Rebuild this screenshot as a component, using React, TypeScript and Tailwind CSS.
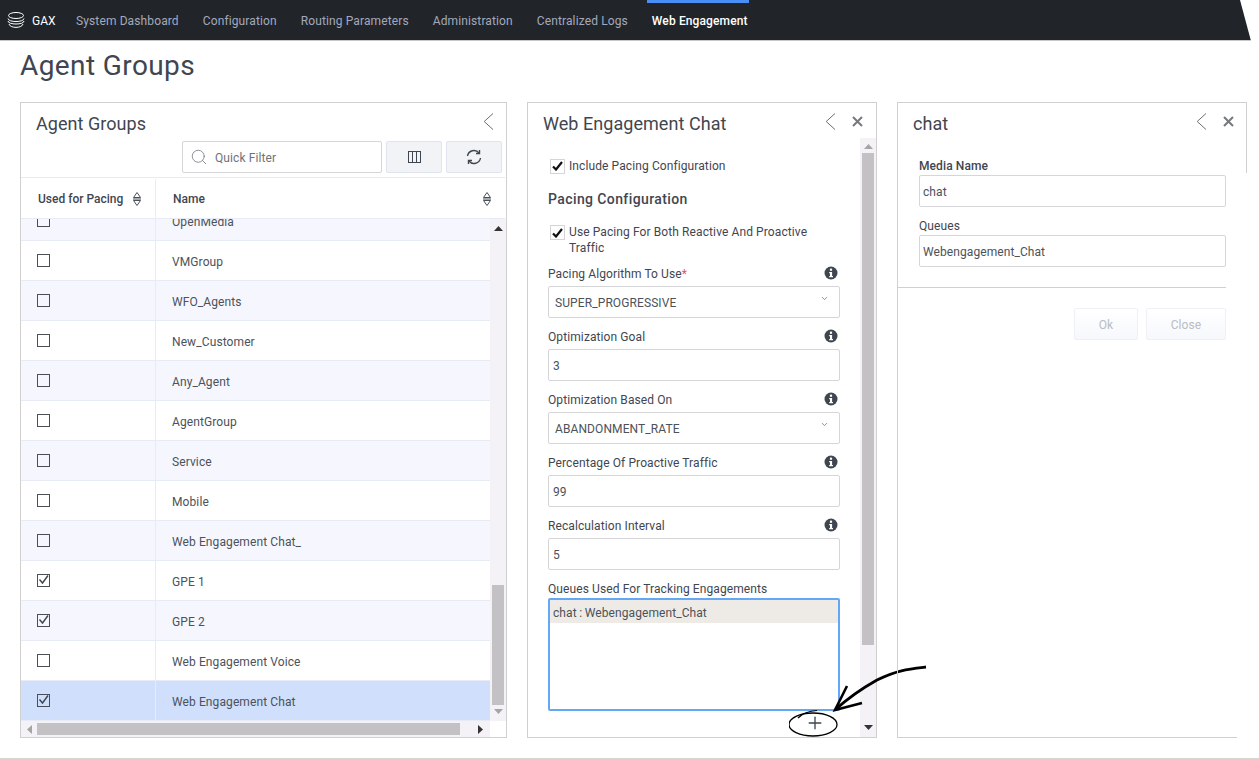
import { Search, ChevronDown, Plus } from 'lucide-react';

const navItems = ['System Dashboard', 'Configuration', 'Routing Parameters', 'Administration', 'Centralized Logs'];

const rows = [
  { name: 'VMGroup', checked: false },
  { name: 'WFO_Agents', checked: false },
  { name: 'New_Customer', checked: false },
  { name: 'Any_Agent', checked: false },
  { name: 'AgentGroup', checked: false },
  { name: 'Service', checked: false },
  { name: 'Mobile', checked: false },
  { name: 'Web Engagement Chat_', checked: false },
  { name: 'GPE 1', checked: true },
  { name: 'GPE 2', checked: true },
  { name: 'Web Engagement Voice', checked: false },
];

function SortIcon() {
  return (
    <svg width="10" height="16" viewBox="0 0 10 16" fill="none" stroke="#4b5158" strokeWidth="1">
      <path d="M5 1.5 L8.5 6.5 H1.5 Z" />
      <path d="M1 8 H9" />
      <path d="M1.5 9.5 H8.5 L5 14.5 Z" />
    </svg>
  );
}

function InfoIcon() {
  return (
    <svg width="14" height="14" viewBox="0 0 14 14" className="-mt-[2px]">
      <circle cx="7" cy="7" r="6.5" fill="#3f4650" />
      <rect x="5.9" y="2.6" width="2.2" height="2.2" fill="#fff" />
      <path d="M5.2 5.9 H8.1 V9.9 H9 V11.2 H5.2 V9.9 H6 V7.2 H5.2 Z" fill="#fff" />
    </svg>
  );
}

function GridCheck({ checked }: { checked: boolean }) {
  return (
    <span className="w-[13px] h-[13px] border border-[#4a4f57] flex items-center justify-center">
      {checked && (
        <svg width="11" height="11" viewBox="0 0 11 11" fill="none" stroke="#3f4650" strokeWidth="1.4">
          <path d="M1.5 4.5 L4.5 8 L10 0.5" />
        </svg>
      )}
    </span>
  );
}

function FormCheck({ className }: { className?: string }) {
  return (
    <span className={'w-[15px] h-[15px] shrink-0 border border-[#d5d5d5] bg-white flex items-center justify-center ' + (className || '')}>
      <svg width="11" height="10" viewBox="0 0 11 10" fill="none" stroke="#111" strokeWidth="2.2">
        <path d="M1 5.5 L4 8.5 L10 1" />
      </svg>
    </span>
  );
}

function GridRow({ name, checked, bg, clipped }: { name: string; checked: boolean; bg: string; clipped?: boolean }) {
  return (
    <div className={'flex h-10 border-b border-[#e6ebf5] shrink-0 ' + bg + (clipped ? ' -mt-[18px]' : '')}>
      <div className="w-[135px] h-full flex items-center pl-4 border-r border-[#e6ebf5] shrink-0">
        <GridCheck checked={checked} />
      </div>
      <div className="pl-4 pt-[2px] flex items-center text-[12px] tracking-[0.1px] text-[#4c5259]">{name}</div>
    </div>
  );
}

function Field({ label, value, select, required }: { label: string; value: string; select?: boolean; required?: boolean }) {
  return (
    <div className="pt-[10px]">
      <div className="flex items-center justify-between h-[17px] mb-1 text-[12px] tracking-[0.1px] text-[#3f4650] pr-[2px]">
        <span>
          {label}
          {required && <span className="text-[#e8574f]">*</span>}
        </span>
        <InfoIcon />
      </div>
      <div className={'h-8 pt-px border border-[#d6d6d9] rounded-[2px] flex items-center justify-between text-[12px] tracking-[0.1px] text-[#4c5259] ' + (select ? 'pl-[6px] pr-[10px]' : 'pl-1')}>
        <span>{value}</span>
        {select && <ChevronDown size={9} strokeWidth={2} className="text-[#3b6fd4] -mt-2" />}
      </div>
    </div>
  );
}

function SmallField({ label, value, bold }: { label: string; value: string; bold?: boolean }) {
  return (
    <div className="mb-[10px]">
      <div className={'h-4 mb-[2px] pt-px text-[12px] leading-4 tracking-[0.1px] text-[#3f4650] ' + (bold ? 'font-medium' : '')}>{label}</div>
      <div className="h-8 pt-px border border-[#d6d6d9] rounded-[2px] flex items-center pl-[3px] text-[12px] tracking-[0.08px] text-[#4c5259]">{value}</div>
    </div>
  );
}

function PanelHead({ title, close }: { title: string; close?: boolean }) {
  return (
    <div className="flex items-center h-[39px] pl-[15px] shrink-0">
      <span className="text-[18px] tracking-[0.05px] text-[#3f4650] flex-1 -mb-[2px]">{title}</span>
      <svg width="11" height="17" viewBox="0 0 11 17" fill="none" stroke="#6b6e73" strokeWidth="1" className="-mt-[3px]">
        <path d="M10 0.5 L1.2 8.5 L10 16.5" />
      </svg>
      {close ? (
        <svg width="11" height="11" viewBox="0 0 11 11" fill="none" stroke="#75787d" strokeWidth="2" className="ml-4 mr-[13px] -mt-[3px]">
          <path d="M1 1 L10 10 M10 1 L1 10" />
        </svg>
      ) : (
        <span className="w-[12px]" />
      )}
    </div>
  );
}

export default function App() {
  return (
    <div className="w-[1259px] h-[759px] bg-white overflow-hidden flex flex-col font-['Roboto',sans-serif]">
      <header className="relative h-[41px] bg-[#212529] border-b border-[#c8c8c8] flex items-center shrink-0">
        <svg width="18" height="17" viewBox="0 0 18 17" fill="none" stroke="#fff" strokeWidth="1" className="ml-[7px]">
          <ellipse cx="9" cy="3.5" rx="7.5" ry="3" />
          <path d="M1 6.5 C1 10.5 17 10.5 17 6.5" />
          <path d="M1 9 C1 13 17 13 17 9" />
          <path d="M2 12 C3 16.5 15 16.5 16 12" />
        </svg>
        <span className="ml-[7px] w-[44px] pt-px text-[12px] text-white">GAX</span>
        <nav className="flex gap-6 pt-px text-[12px] tracking-[0.12px] text-[#a3a9bd]">
          {navItems.map((item) => (
            <span key={item}>{item}</span>
          ))}
          <span className="font-medium text-white">Web Engagement</span>
        </nav>
        <span className="absolute left-[647px] top-0 w-[102px] h-[3px] bg-[#4a8ff5]" />
        <svg width="20" height="41" viewBox="0 0 20 41" className="absolute right-0 top-0">
          <path d="M1 0 H20 V41 H12 Z" fill="#fff" />
        </svg>
      </header>

      <h1 className="h-[61px] pl-5 pt-[7px] text-[28px] leading-[36px] tracking-[0.4px] text-[#3f4650] shrink-0">Agent Groups</h1>

      <main className="flex gap-5 pl-5 h-[636px] shrink-0">
        <section className="w-[487px] border border-[#d0d0d0] flex flex-col">
          <PanelHead title="Agent Groups" />
          <div className="flex justify-end gap-1 pr-1 h-[35px] -mt-px mb-px shrink-0">
            <div className="w-[200px] h-8 border border-[#d6d6d9] rounded-[2px] flex items-center pl-[7px]">
              <Search size={18} strokeWidth={1} className="text-[#6b6f75]" />
              <span className="ml-[7px] pt-px text-[12px] tracking-[0.1px] text-[#6f7378]">Quick Filter</span>
            </div>
            <div className="w-14 h-8 border border-[#dfe4f0] rounded-[2px] bg-[#f1f3f7] flex items-center justify-center">
              <svg width="13" height="12" viewBox="0 0 13 12" fill="none" stroke="#3f4650" strokeWidth="1">
                <rect x="0.5" y="0.5" width="12" height="11" />
                <path d="M4.5 0.5 V11.5 M8.5 0.5 V11.5" />
              </svg>
            </div>
            <div className="w-14 h-8 border border-[#dfe4f0] rounded-[2px] bg-[#f1f3f7] flex items-center justify-center">
              <svg width="16" height="16" viewBox="0 0 16 16" fill="none" stroke="#3f4650" strokeWidth="1.4">
                <path d="M1.5 7 A6.5 6.5 0 0 1 13 4" />
                <path d="M13.5 1 V4.5 H10" />
                <path d="M14.5 9 A6.5 6.5 0 0 1 3 12" />
                <path d="M2.5 15 V11.5 H6" />
              </svg>
            </div>
          </div>
          <div className="flex h-[42px] pt-px border-y border-[#e6ebf5] text-[12px] font-medium text-[#3f4650] shrink-0 mr-px">
            <div className="w-[135px] flex items-center pl-[17px] gap-[9px] border-r border-[#e6ebf5]">
              Used for Pacing
              <SortIcon />
            </div>
            <div className="flex-1 flex items-center justify-between pl-[17px] pr-[13px]">
              Name
              <SortIcon />
            </div>
          </div>
          <div className="flex flex-1 min-h-0">
            <div className="flex-1 overflow-hidden flex flex-col">
              <GridRow name="OpenMedia" checked={false} bg="bg-[#f6f7fe]" clipped />
              {rows.map((r, i) => (
                <GridRow key={r.name} name={r.name} checked={r.checked} bg={i % 2 === 0 ? 'bg-white' : 'bg-[#f6f7fe]'} />
              ))}
              <GridRow name="Web Engagement Chat" checked bg="bg-[#cfdffc]" />
            </div>
            <div className="w-4 bg-[#f5f2f7] flex flex-col items-center pt-[7px] shrink-0">
              <svg width="9" height="5" viewBox="0 0 9 5"><path d="M4.5 0 L9 5 H0 Z" fill="#333" /></svg>
              <div className="flex-1" />
              <div className="w-3 h-[120px] bg-[#c3c1c4]" />
              <svg width="9" height="5" viewBox="0 0 9 5" className="mt-1 mb-[7px]"><path d="M0 0 H9 L4.5 5 Z" fill="#a5a5a5" /></svg>
            </div>
          </div>
          <div className="flex h-[16px] shrink-0">
            <div className="w-[469px] bg-[#f5f2f7] flex items-center pl-[6px]">
              <svg width="5" height="9" viewBox="0 0 5 9"><path d="M5 0 V9 L0 4.5 Z" fill="#a5a5a5" /></svg>
              <div className="ml-[5px] w-[423px] h-3 bg-[#c3c1c4]" />
              <svg width="5" height="9" viewBox="0 0 5 9" className="ml-[18px]"><path d="M0 0 L5 4.5 L0 9 Z" fill="#333" /></svg>
            </div>
          </div>
        </section>

        <section className="relative w-[350px] border border-[#d0d0d0] flex flex-col">
          <PanelHead title="Web Engagement Chat" close />
          <div className="flex flex-1 min-h-0 -mt-1">
            <div className="flex-1 pl-5 pr-5 flex flex-col">
              <label className="flex items-center gap-1 pl-[2px] h-4 mt-5 text-[12px] tracking-[0.1px] text-[#3f4650]">
                <FormCheck />
                Include Pacing Configuration
              </label>
              <div className="mt-[15px] h-5 text-[14px] font-medium tracking-[0.4px] text-[#3f4650] flex items-center">Pacing Configuration</div>
              <label className="flex items-start gap-1 pl-[2px] mt-[15px] text-[12px] leading-4 tracking-[0.1px] text-[#3f4650] h-[31px] shrink-0">
                <FormCheck className="mt-[1px]" />
                <span className="w-[250px]">Use Pacing For Both Reactive And Proactive Traffic</span>
              </label>
              <Field label="Pacing Algorithm To Use" value="SUPER_PROGRESSIVE" select required />
              <Field label="Optimization Goal" value="3" />
              <Field label="Optimization Based On" value="ABANDONMENT_RATE" select />
              <Field label="Percentage Of Proactive Traffic" value="99" />
              <Field label="Recalculation Interval" value="5" />
              <div className="h-[17px] mt-[10px] mb-px text-[12px] tracking-[0.1px] text-[#3f4650]">Queues Used For Tracking Engagements</div>
              <div className="h-[113px] border-2 border-[#64a8f5] rounded-[2px] shrink-0">
                <div className="h-[23px] pt-[2px] bg-[#eeebe7] flex items-center pl-[3px] text-[12px] tracking-[0.08px] [word-spacing:-0.5px] text-[#4c5259]">chat : Webengagement_Chat</div>
              </div>
              <div className="flex justify-end pr-[15px] pt-[2px]">
                <Plus size={20} strokeWidth={1.6} className="text-[#3f4650]" />
              </div>
            </div>
            <div className="w-[16px] bg-[#f5f2f7] flex flex-col items-center pt-[6px] shrink-0">
              <svg width="9" height="5" viewBox="0 0 9 5"><path d="M4.5 0 L9 5 H0 Z" fill="#a5a5a5" /></svg>
              <div className="w-3 h-[492px] mt-[4px] bg-[#c3c1c4]" />
              <div className="flex-1" />
              <svg width="9" height="5" viewBox="0 0 9 5" className="mb-[7px]"><path d="M0 0 H9 L4.5 5 Z" fill="#333" /></svg>
            </div>
          </div>
          <svg width="145" height="75" viewBox="0 0 145 75" fill="none" stroke="#000" className="absolute left-[261px] top-[562px]">
            <path d="M137 2 C120 4 108 5 88 15 C72 24 58 34 46 45" strokeWidth="2.8" />
            <path d="M58 21 L46 45 L73 38" strokeWidth="2.6" />
            <ellipse cx="24" cy="59.5" rx="24" ry="11.5" strokeWidth="1.3" />
            <path d="M9 53 C13 49 20 46 28 45.5" strokeWidth="1.2" />
          </svg>
        </section>

        <section className="relative w-[350px] border-l border-t border-[#d0d0d0] flex flex-col">
          <PanelHead title="chat" close />
          <span className="absolute right-0 -top-px w-px h-[71px] bg-[#d0d0d0]" />
          <span className="absolute left-0 bottom-0 w-[339px] h-px bg-[#d0d0d0]" />
          <div className="pl-[21px] pr-[21px] pt-[15px]">
            <SmallField label="Media Name" value="chat" bold />
            <SmallField label="Queues" value="Webengagement_Chat" />
          </div>
          <div className="h-px bg-[#d0d0d0] mr-[21px] mt-[10px]" />
          <div className="flex justify-end gap-2 pr-[21px] mt-5">
            <div className="w-16 h-8 pt-px border border-[#eef0f5] rounded-[2px] bg-gradient-to-b from-white to-[#f6f8fc] flex items-center justify-center text-[12px] tracking-[0.1px] text-[#b9bcc2]">Ok</div>
            <div className="w-20 h-8 pt-px border border-[#eef0f5] rounded-[2px] bg-gradient-to-b from-white to-[#f6f8fc] flex items-center justify-center text-[12px] tracking-[0.1px] text-[#b9bcc2]">Close</div>
          </div>
        </section>
      </main>

      <div className="mt-5 h-px bg-[#d6d8d0] shrink-0" />
    </div>
  );
}
